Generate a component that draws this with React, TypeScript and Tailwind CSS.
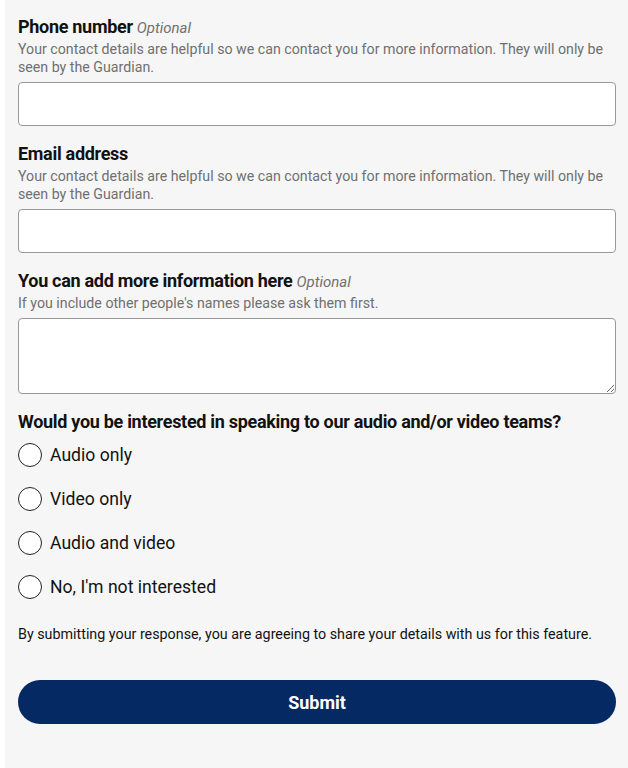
import React, { useState } from 'react';

const font = { fontFamily: 'Roboto, Lato, sans-serif' };

const Field = ({ label, optional, hint, children }: { label: string; optional?: boolean; hint: string; children: React.ReactNode }) => (
  <div className="mb-4">
    <div className="h-[22px] leading-[24px] text-[18px] font-bold text-[#121212] tracking-[-0.3px]">
      {label}
      {optional && <span className="ml-[4px] text-[15px] font-normal italic text-[#707070] tracking-normal">Optional</span>}
    </div>
    <p className="text-[14.2px] leading-[18px] text-[#707070] mt-[3px]">{hint}</p>
    <div className="mt-[6px]">{children}</div>
  </div>
);

const App: React.FC = () => {
  const [choice, setChoice] = useState<string | null>(null);
  const options = ['Audio only', 'Video only', 'Audio and video', "No, I'm not interested"];

  return (
    <div className="min-h-[768px] bg-white pl-[5px]" style={font}>
      <form className="min-h-[768px] bg-[#f6f6f6] pl-[13px] pr-[12px] pt-[15px] pb-[44px]" onSubmit={(e) => e.preventDefault()}>
        <Field label="Phone number" optional hint="Your contact details are helpful so we can contact you for more information. They will only be seen by the Guardian.">
          <input type="tel" className="block w-full h-[44px] bg-white border border-[#999] rounded-[4px] px-2" />
        </Field>
        <Field label="Email address" hint="Your contact details are helpful so we can contact you for more information. They will only be seen by the Guardian.">
          <input type="email" className="block w-full h-[44px] bg-white border border-[#999] rounded-[4px] px-2" />
        </Field>
        <Field label="You can add more information here" optional hint="If you include other people's names please ask them first.">
          <textarea className="block w-full h-[76px] bg-white border border-[#999] rounded-[4px] px-2" />
        </Field>

        <fieldset>
          <legend className="h-[22px] leading-[24px] text-[18px] font-bold text-[#121212] tracking-[-0.3px]">
            Would you be interested in speaking to our audio and/or video teams?
          </legend>
          <div className="flex flex-col pt-[1px]">
            {options.map((o) => (
              <label key={o} className="flex items-center h-[44px] gap-[8px] cursor-pointer">
                <span
                  className="w-[24px] h-[24px] rounded-full border border-[#222] bg-white flex items-center justify-center"
                  onClick={() => setChoice(o)}
                >
                  {choice === o && <span className="w-[12px] h-[12px] rounded-full bg-[#052962]" />}
                </span>
                <span className="text-[17.6px] text-[#121212]">{o}</span>
              </label>
            ))}
          </div>
        </fieldset>

        <p className="mt-[16px] text-[14.3px] leading-[18px] text-[#121212]">
          By submitting your response, you are agreeing to share your details with us for this feature.
        </p>

        <button type="submit" className="mt-[37px] w-full h-[44px] rounded-full bg-[#052962] text-white text-[18px] font-bold">
          Submit
        </button>
      </form>
    </div>
  );
};

export default App;
